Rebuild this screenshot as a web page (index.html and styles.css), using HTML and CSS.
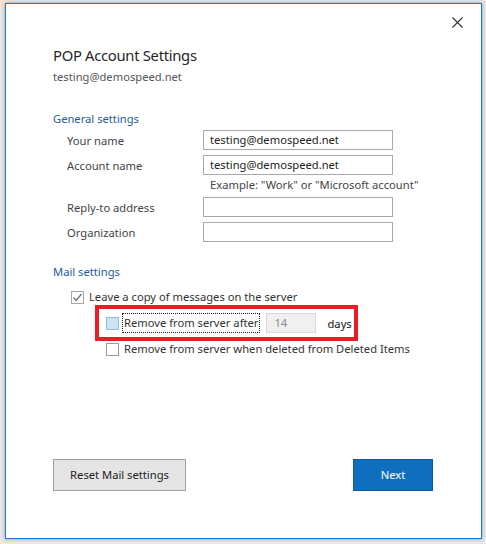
FILE: index.html
```html
<!DOCTYPE html>
<html>
<head>
<meta charset="utf-8">
<link rel="stylesheet" href="styles.css">
</head>
<body>
<div class="backdrop">
  <div class="dialog">
    <button class="close" aria-label="Close">
      <svg width="11" height="11" viewBox="0 0 11 11"><path d="M0.5 0.5 L10.5 10.5 M10.5 0.5 L0.5 10.5" stroke="#333" stroke-width="1.1" fill="none"/></svg>
    </button>
    <div class="title">POP Account Settings</div>
    <div class="subtitle">testing@demospeed.net</div>

    <div class="section-head general">General settings</div>
    <div class="form">
      <div class="row"><span class="label">Your name</span><span class="input">testing@demospeed.net</span></div>
      <div class="row"><span class="label">Account name</span><span class="input">testing@demospeed.net</span></div>
      <div class="hint">Example: "Work" or "Microsoft account"</div>
      <div class="row"><span class="label">Reply-to address</span><span class="input"></span></div>
      <div class="row"><span class="label">Organization</span><span class="input"></span></div>
    </div>

    <div class="section-head mail">Mail settings</div>
    <div class="check-row first">
      <span class="cb checked">
        <svg width="11" height="11" viewBox="0 0 11 11"><path d="M1.5 5.5 L4.2 8.3 L9.5 2" stroke="#666" stroke-width="1.2" fill="none"/></svg>
      </span>
      <span class="cb-label">Leave a copy of messages on the server</span>
    </div>
    <div class="highlight">
      <span class="cb hover"></span>
      <span class="cb-label focus">Remove from server after</span>
      <span class="days-input">14</span>
      <span class="days">days</span>
    </div>
    <div class="check-row second">
      <span class="cb"></span>
      <span class="cb-label">Remove from server when deleted from Deleted Items</span>
    </div>

    <div class="buttons">
      <button class="btn reset">Reset Mail settings</button>
      <button class="btn next">Next</button>
    </div>
  </div>
</div>
</body>
</html>
```
FILE: styles.css
```css
html, body {
  margin: 0;
  padding: 0;
}
body {
  width: 486px;
  height: 544px;
  overflow: hidden;
  background: #e9e9e9;
  font-family: "Noto Sans", "Liberation Sans", sans-serif;
}
.backdrop {
  padding: 3px 0 0 5px;
}
.dialog {
  position: relative;
  box-sizing: border-box;
  width: 477px;
  height: 536px;
  background: #fff;
  border: 1px solid #1979ca;
  box-shadow: 0 0 4px rgba(0,0,0,0.35);
  padding: 39px 0 47px 47px;
  display: flex;
  flex-direction: column;
  color: #444;
  font-size: 11.2px;
  white-space: nowrap;
}
.close {
  position: absolute;
  top: 13px;
  right: 18px;
  background: none;
  border: 0;
  padding: 0;
  width: 11px;
  height: 11px;
}
.close svg { display: block; }
.title {
  font-size: 14.8px;
  letter-spacing: -0.3px;
  line-height: 24px;
  color: #262626;
}
.subtitle {
  margin-top: 2px;
  line-height: 16px;
  color: #555;
}
.section-head {
  color: #1e5a9c;
  line-height: 16px;
}
.section-head.general { margin-top: 26px; }
.section-head.mail { margin-top: 22px; }
.form {
  margin-top: 3px;
  padding-left: 14px;
  display: flex;
  flex-direction: column;
  gap: 5px;
}
.row {
  display: flex;
  align-items: center;
  height: 20px;
}
.label {
  width: 136px;
}
.input {
  box-sizing: border-box;
  width: 190px;
  height: 20px;
  border: 1px solid #a9a9a9;
  padding: 0 0 0 6px;
  line-height: 18px;
  color: #222;
}
.hint {
  margin: -4px 0 -2px 143px;
  line-height: 18px;
}
.check-row {
  display: flex;
  align-items: center;
  height: 16px;
}
.check-row.first {
  margin-top: 9px;
  padding-left: 18px;
}
.check-row.second {
  margin-top: 0;
  padding-left: 53px;
}
.cb {
  box-sizing: border-box;
  width: 13px;
  height: 13px;
  border: 1px solid #9a9a9a;
  background: #fff;
  display: flex;
  align-items: center;
  justify-content: center;
  flex: none;
}
.cb svg { display: block; }
.cb.checked { border-color: #a8a8a8; }
.cb.hover {
  background: #cce4f7;
  border-color: #8cbde8;
}
.cb-label {
  margin-left: 5px;
  color: #333;
  line-height: 16px;
}
.highlight {
  box-sizing: border-box;
  margin: 0 0 0 42px;
  width: 263px;
  height: 36px;
  border: 4px solid #ed1c24;
  display: flex;
  align-items: center;
  padding-left: 7px;
}
.highlight .cb-label.focus {
  margin-left: 4px;
  outline: 1px dotted #222;
  outline-offset: 0;
  padding: 1px 1px;
}
.days-input {
  box-sizing: border-box;
  margin-left: 7px;
  width: 50px;
  height: 20px;
  background: #f0f0f0;
  border: 1px solid #d9d9d9;
  color: #8a8a8a;
  padding-left: 7px;
  line-height: 18px;
}
.days {
  margin-left: 11px;
  color: #111;
}
.buttons {
  margin-top: auto;
  display: flex;
  justify-content: space-between;
  padding-right: 48px;
}
.btn {
  box-sizing: border-box;
  height: 32px;
  font-family: inherit;
  font-size: 11.2px;
  padding: 0 0 1px;
}
.reset {
  width: 133px;
  background: #e5e5e5;
  border: 1px solid #a0a0a0;
  color: #222;
}
.next {
  width: 80px;
  background: #106ebe;
  border: 1px solid #0a5aa0;
  color: #fff;
}
```
